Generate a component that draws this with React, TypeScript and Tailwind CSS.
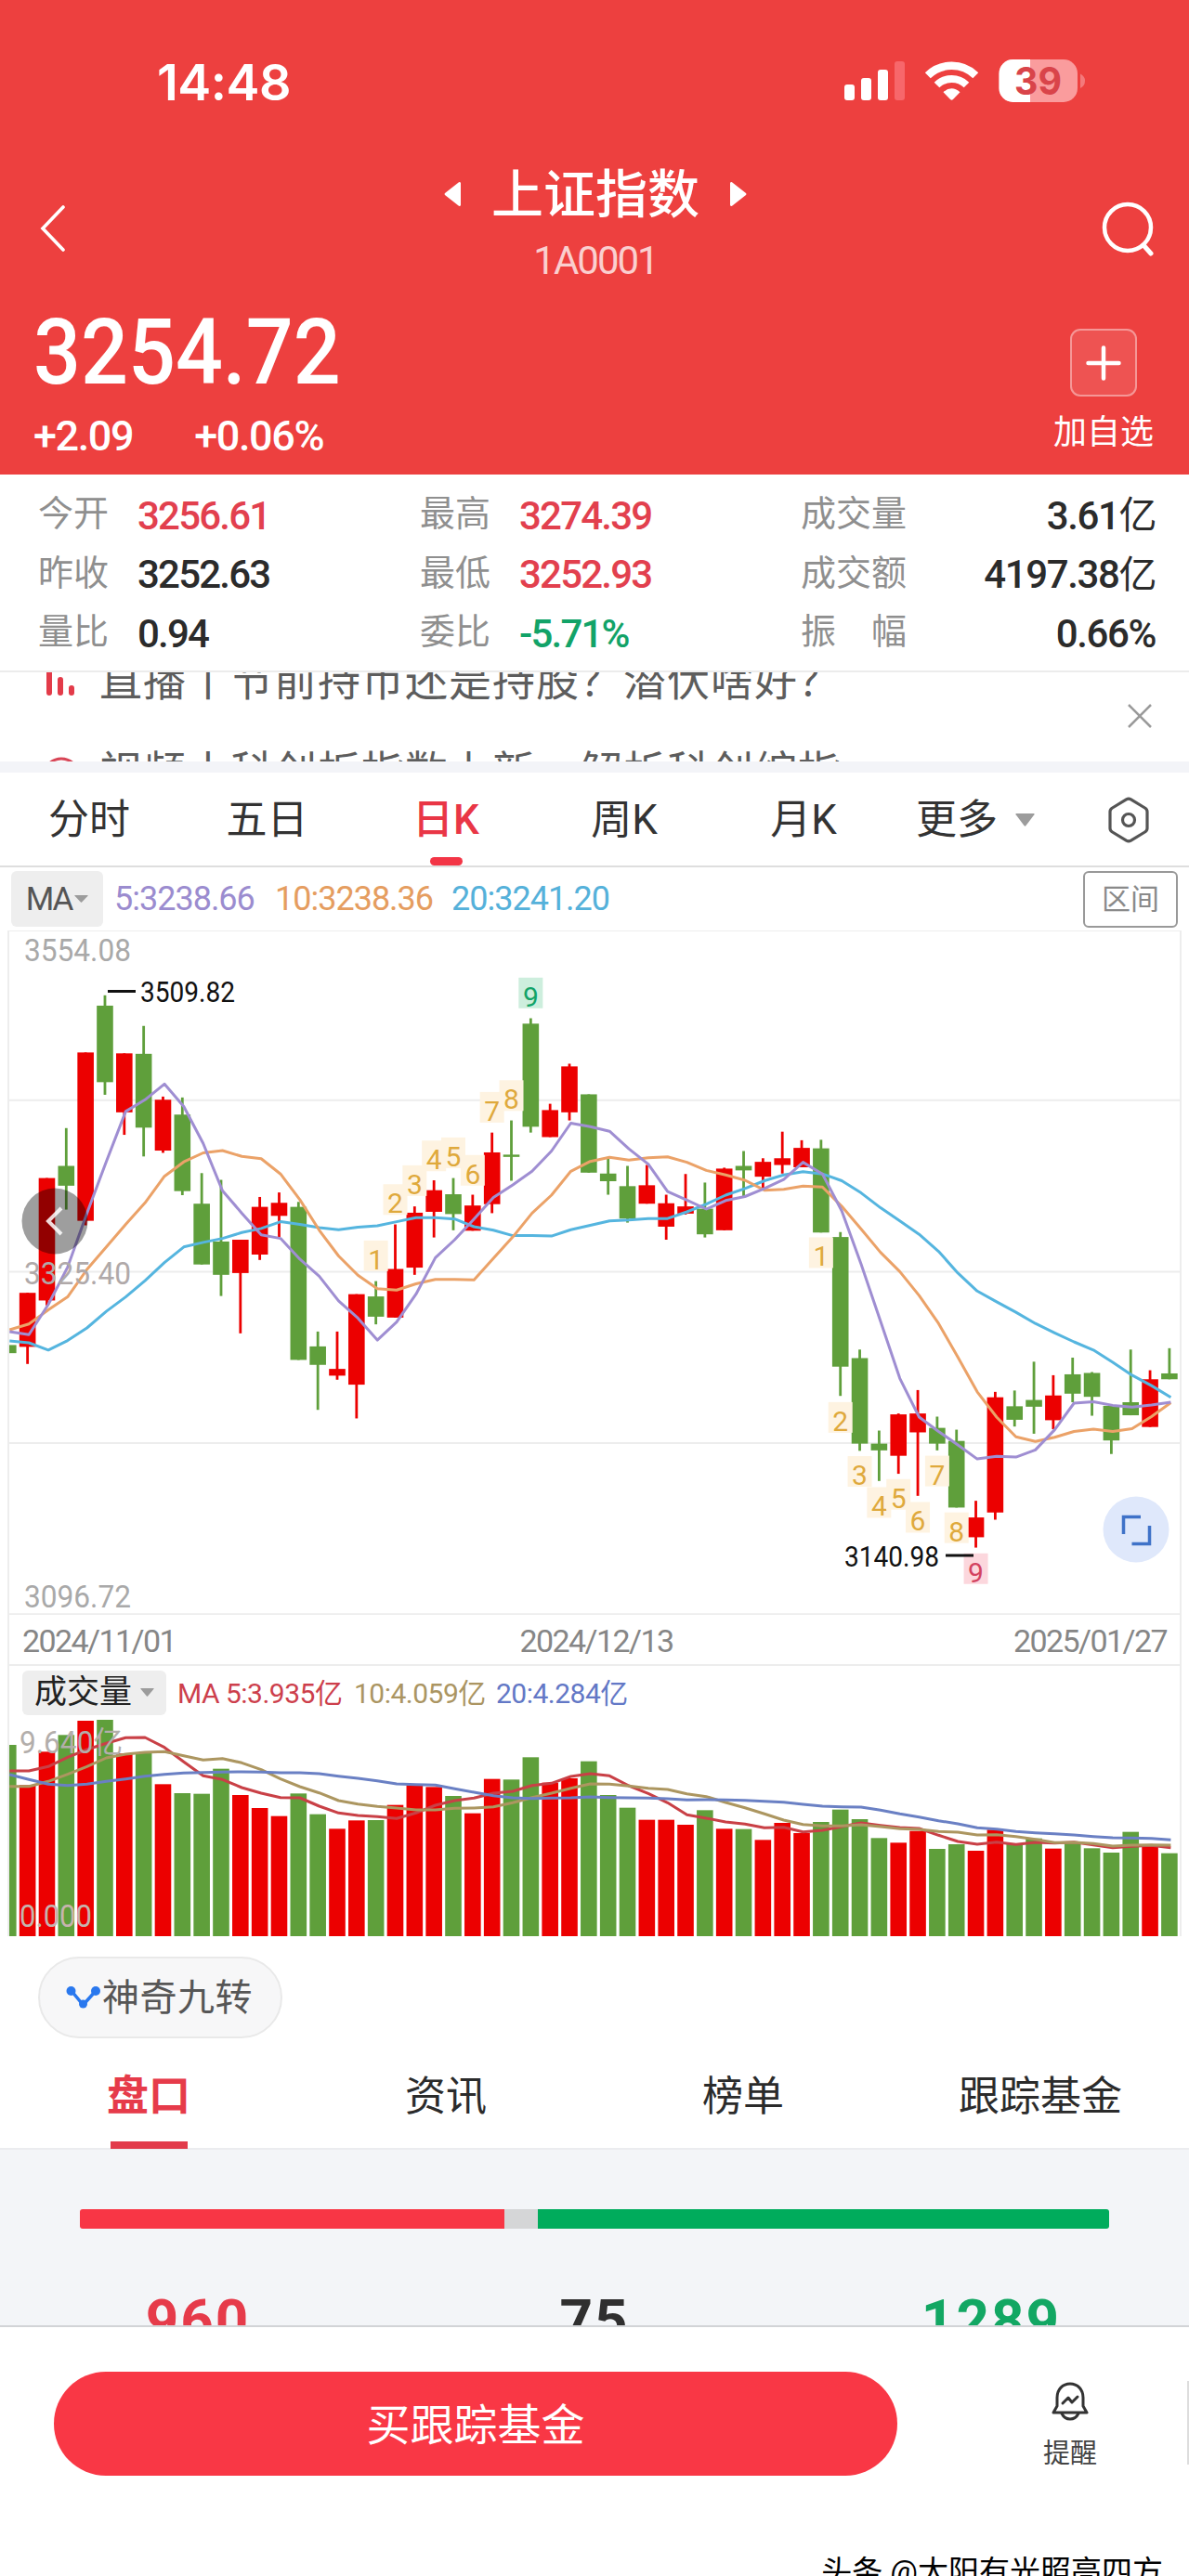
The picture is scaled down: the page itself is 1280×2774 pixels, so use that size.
import React from 'react';

type Candle = [color: 'r' | 'g', high: number, top: number, bottom: number, low: number];

const STEP = 20.835;
const FIRST_X = 8.8;
const BODY = 17.6;
const RED = '#ec0000';
const GREEN = '#5f9f3b';

const cx = (i: number) => FIRST_X + i * STEP;
const priceY = (v: number) => (v - 27) * 0.48473;
const volumeY = (v: number) => (v - 354) / 3;

const candles: Candle[] = [
  ['g', 948, 948, 966, 966],
  ['r', 832, 832, 952, 990],
  ['r', 577, 577, 849, 860],
  ['g', 466, 550, 594, 647],
  ['r', 298, 298, 672, 682],
  ['g', 171, 194, 364, 392],
  ['r', 300, 300, 431, 481],
  ['g', 239, 301, 465, 529],
  ['r', 396, 403, 516, 521],
  ['g', 398, 436, 606, 615],
  ['g', 566, 634, 769, 769],
  ['g', 581, 718, 792, 839],
  ['r', 714, 714, 788, 922],
  ['r', 619, 641, 747, 759],
  ['r', 609, 632, 661, 708],
  ['g', 630, 641, 981, 981],
  ['g', 918, 951, 992, 1092],
  ['r', 918, 1001, 1016, 1025],
  ['r', 835, 835, 1036, 1111],
  ['g', 806, 840, 885, 902],
  ['r', 680, 779, 887, 887],
  ['r', 640, 654, 776, 792],
  ['r', 582, 604, 652, 709],
  ['g', 577, 613, 657, 693],
  ['r', 614, 638, 694, 694],
  ['r', 476, 520, 635, 655],
  ['g', 449, 525, 530, 583],
  ['g', 222, 234, 463, 476],
  ['r', 412, 426, 486, 486],
  ['r', 323, 329, 431, 449],
  ['g', 391, 391, 565, 565],
  ['g', 530, 567, 584, 614],
  ['g', 550, 595, 667, 676],
  ['r', 548, 593, 634, 634],
  ['r', 614, 633, 685, 714],
  ['r', 568, 640, 656, 658],
  ['g', 587, 645, 702, 709],
  ['r', 554, 556, 693, 693],
  ['g', 517, 550, 560, 618],
  ['r', 533, 541, 574, 600],
  ['r', 474, 533, 548, 567],
  ['r', 493, 510, 553, 553],
  ['g', 492, 511, 698, 698],
  ['g', 697, 708, 996, 1061],
  ['g', 958, 977, 1167, 1183],
  ['g', 1138, 1167, 1182, 1250],
  ['r', 1100, 1102, 1194, 1234],
  ['r', 1048, 1100, 1142, 1283],
  ['g', 1107, 1132, 1167, 1182],
  ['g', 1136, 1161, 1309, 1309],
  ['r', 1294, 1331, 1375, 1398],
  ['r', 1052, 1064, 1320, 1336],
  ['g', 1049, 1084, 1114, 1129],
  ['g', 985, 1070, 1085, 1145],
  ['r', 1015, 1060, 1115, 1135],
  ['g', 976, 1013, 1056, 1075],
  ['g', 1008, 1010, 1063, 1105],
  ['g', 1080, 1083, 1160, 1190],
  ['g', 958, 1075, 1104, 1104],
  ['r', 1004, 1024, 1130, 1130],
  ['g', 955, 1011, 1024, 1024],
];

const priceMa5 = [
  918, 925, 858, 775, 655, 540, 429, 403, 368, 418, 500, 605, 655, 703, 711, 757, 795, 850, 888, 937, 897, 835, 754,
  714, 668, 620, 592, 562, 517, 455, 463, 473, 512, 546, 607, 626, 646, 627, 618, 600, 580, 542, 568, 650, 768, 895,
  1022, 1108, 1140, 1170, 1201, 1195, 1197, 1181, 1136, 1077, 1074, 1082, 1086, 1081, 1075,
];
const priceMa10 = [
  914, 901, 870, 841, 780, 730, 680, 632, 573, 541, 521, 516, 529, 534, 568, 625, 693, 750, 793, 823, 826, 812, 802,
  802, 803, 755, 708, 655, 615, 562, 540, 531, 537, 532, 530, 542, 560, 570, 582, 604, 602, 595, 597, 640, 690, 742,
  785, 838, 900, 975, 1052, 1108, 1152, 1162, 1153, 1140, 1135, 1140, 1134, 1107, 1076,
];
const priceMa20 = [
  939, 943, 959, 938, 910, 873, 841, 805, 765, 730, 720, 711, 698, 689, 674, 680, 687, 692, 686, 683, 674, 665, 665,
  668, 685, 693, 705, 705, 706, 692, 682, 672, 670, 667, 667, 652, 635, 615, 600, 583, 570, 563, 568, 583, 610, 643,
  672, 702, 740, 788, 828, 852, 875, 900, 921, 941, 959, 986, 1015, 1038, 1064,
];

const volumes = [
  450, 580, 472, 418, 372, 369, 478, 474, 577, 606, 608, 527, 612, 654, 680, 607, 674, 721, 694, 693, 644, 580, 586,
  615, 671, 560, 562, 490, 572, 558, 503, 612, 653, 692, 692, 708, 661, 721, 722, 757, 702, 735, 699, 659, 690, 751,
  766, 728, 786, 771, 792, 724, 768, 752, 785, 763, 784, 798, 731, 775, 800,
];
const volumeMa5 = [
  534, 534, 520, 490, 465, 445, 427, 426, 458, 505, 550, 562, 588, 606, 620, 621, 648, 670, 678, 682, 688, 670, 645,
  630, 622, 606, 600, 581, 574, 552, 543, 550, 582, 607, 637, 676, 687, 699, 706, 718, 716, 731, 726, 714, 702, 710,
  717, 720, 742, 762, 771, 764, 772, 765, 767, 764, 773, 782, 778, 775, 782,
];
const volumeMa10 = [
  584, 584, 568, 545, 520, 492, 480, 474, 472, 485, 499, 494, 508, 530, 560, 585, 605, 630, 641, 649, 654, 660, 660,
  655, 654, 650, 637, 620, 606, 590, 576, 577, 583, 590, 594, 608, 617, 636, 653, 673, 693, 707, 712, 712, 708, 714,
  721, 723, 730, 732, 741, 740, 746, 755, 766, 765, 769, 777, 774, 773, 774,
];
const volumeMa20 = [
  546, 562, 577, 581, 577, 568, 560, 551, 545, 541, 539, 538, 537, 538, 540, 540, 543, 551, 558, 566, 576, 578, 580,
  592, 603, 614, 621, 623, 622, 621, 618, 620, 621, 622, 624, 628, 627, 628, 629, 632, 635, 642, 648, 650, 651, 661,
  673, 683, 695, 705, 718, 722, 730, 734, 737, 741, 746, 750, 751, 752, 757,
];

// [candle index, label centre, count]
const nineTurns: [number, number, number][] = [
  [19, 757, 1], [20, 632, 2], [21, 590, 3], [22, 535, 4], [23, 528, 5], [24, 567, 6], [25, 427, 7], [26, 401, 8], [27, 173, 9],
  [42, 750, 1], [43, 1116, 2], [44, 1236, 3], [45, 1305, 4], [46, 1287, 5], [47, 1338, 6], [48, 1235, 7], [49, 1361, 8], [50, 1452, 9],
];

const linePoints = (values: number[], toY: (v: number) => number) =>
  values.map((v, i) => `${(cx(i) + 1.5).toFixed(1)},${toY(v).toFixed(1)}`).join(' ');

const Line: React.FC<{ values: number[]; toY: (v: number) => number; color: string }> = ({ values, toY, color }) => (
  <polyline points={linePoints(values, toY)} fill="none" stroke={color} strokeWidth="3" strokeLinejoin="round" />
);

const Label: React.FC<{ x: number; y: number; w: number; size: number; color: string; children: string }> = ({
  x, y, w, size, color, children,
}) => (
  <text x={x} y={y} fontSize={size} fill={color} textLength={w} lengthAdjust="spacingAndGlyphs">
    {children}
  </text>
);

const Caret: React.FC<{ w: number; h: number }> = ({ w, h }) => (
  <svg width={w} height={h} viewBox="0 0 20 12" preserveAspectRatio="none">
    <path d="M1 0H19Q20 0 19.4 1L10.8 11.4Q10 12 9.2 11.4L.6 1Q0 0 1 0Z" fill="#9c9c9c" />
  </svg>
);

const StatusBar = () => (
  <div className="flex h-[176px] items-start justify-between pl-[169px] pr-[112px]">
    <div className="mt-[56px] font-['Inter',sans-serif] text-[54px] leading-[66px] font-semibold tracking-[-0.5px]">14:48</div>
    <svg width="260" height="50" viewBox="908 62 260 50" className="mt-[62px]">
      <rect x="909" y="91" width="11" height="17" rx="3" fill="#fff" />
      <rect x="927" y="84" width="11" height="24" rx="3" fill="#fff" />
      <rect x="945" y="75" width="11" height="33" rx="3" fill="#fff" />
      <rect x="963" y="66" width="11" height="42" rx="3" fill="#f7676b" />
      <path d="M998.800 81.200A37 37 0 0 1 1050.300 81.200" fill="none" stroke="#fff" strokeWidth="8.500" />
      <path d="M1008.500 91.500A23 23 0 0 1 1040.500 91.500" fill="none" stroke="#fff" strokeWidth="8" />
      <path d="M1015.500 99.200Q1024.500 91.500 1033.500 99.200L1026 107Q1024.500 108.500 1023 107Z" fill="#fff" />
      <clipPath id="battery">
        <rect x="1075.500" y="64" width="84.500" height="46" rx="15" />
      </clipPath>
      <g clipPath="url(#battery)">
        <rect x="1075" y="64" width="86" height="46" fill="#fa9c9d" />
        <rect x="1075" y="64" width="34" height="46" fill="#fff" />
      </g>
      <path d="M1163 79.500Q1168 82 1168 87Q1168 92.500 1163 95Z" fill="#f4797b" />
      <text x="1117.500" y="102" textAnchor="middle" fontFamily="Inter, sans-serif" fontWeight="700" fontSize="41" fill="#d9444a" textLength="51" lengthAdjust="spacingAndGlyphs">
        39
      </text>
    </svg>
  </div>
);

const Header = () => (
  <header className="h-[511px] bg-[#ed403f] text-white">
    <StatusBar />
    <div className="flex h-[150px] items-start justify-between pr-[38px] pl-[42px]">
      <svg width="30" height="52" viewBox="0 0 30 52" className="mt-[44px]">
        <path d="M26 3L4 26L26 49" fill="none" stroke="#fff" strokeWidth="3.600" strokeLinecap="round" />
      </svg>
      <div className="ml-[26px] flex flex-col items-center">
        <div className="flex h-[66px] items-center gap-[32px]">
          <svg width="19" height="28" viewBox="0 0 19 28"><path d="M18 2V26Q17 28 15 26L1 15Q0 14 1 13L15 2Q17 0 18 2Z" fill="#fff" /></svg>
          <h1 className="mt-[2px] text-[56px] leading-[66px] font-medium">上证指数</h1>
          <svg width="19" height="28" viewBox="0 0 19 28"><path d="M1 2V26Q2 28 4 26L18 15Q19 14 18 13L4 2Q2 0 1 2Z" fill="#fff" /></svg>
        </div>
        <div className="mt-[15px] text-[42px] leading-[48px] tracking-[-2px] text-white/75">1A0001</div>
      </div>
      <svg width="58" height="60" viewBox="0 0 58 60" className="mt-[40px]">
        <circle cx="30" cy="29" r="25" fill="none" stroke="#fff" strokeWidth="4.500" />
        <path d="M47 48L55 57" stroke="#fff" strokeWidth="5" strokeLinecap="round" />
      </svg>
    </div>
    <div className="flex justify-between pr-[38px] pl-[36px]">
      <div className="pt-[2px]">
        <div className="w-[365px] origin-left scale-x-[.915] text-[98px] leading-[104px] font-medium">3254.72</div>
        <div className="mt-[12px] flex gap-[66px] text-[45px] leading-[52px] font-medium tracking-[-1.4px]">
          <span>+2.09</span>
          <span>+0.06%</span>
        </div>
      </div>
      <div className="flex flex-col items-center pt-[28px]">
        <div className="flex h-[73px] w-[72px] items-center justify-center rounded-[11px] border-2 border-white/40 bg-white/10">
          <svg width="38" height="38" viewBox="0 0 38 38"><path d="M19 2.500V35.500M2.500 19H35.500" stroke="#fff" strokeWidth="4.500" strokeLinecap="round" /></svg>
        </div>
        <div className="mt-[17px] text-[36px] leading-[44px]">加自选</div>
      </div>
    </div>
  </header>
);

const Stat: React.FC<{ label: string; value: string; tone?: string }> = ({ label, value, tone = 'text-[#2b2b2b]' }) => (
  <div className="flex items-center">
    <span className="mr-[31px] text-[38px] text-[#8f8f8f]">{label}</span>
    <span className={`mt-[5px] text-[42px] font-medium tracking-[-1.8px] ${tone}`}>{value}</span>
  </div>
);

const WideStat: React.FC<{ label: string; value: string; unit?: string }> = ({ label, value, unit }) => (
  <div className="flex items-center justify-between">
    <span className="text-[38px] whitespace-pre text-[#8f8f8f]">{label}</span>
    <span className="mt-[5px] flex items-center text-[42px] font-medium tracking-[-1.4px] text-[#2b2b2b]">
      {value}
      {unit && <span className="text-[41px] font-normal">{unit}</span>}
    </span>
  </div>
);

const Stats = () => (
  <section className="grid h-[213px] grid-cols-[411px_410px_382px] grid-rows-[64px_63px_64px] border-b-2 border-[#ececec] pt-[10px] pl-[41px]">
    <Stat label="今开" value="3256.61" tone="text-[#e2404e]" />
    <Stat label="最高" value="3274.39" tone="text-[#e2404e]" />
    <WideStat label="成交量" value="3.61" unit="亿" />
    <Stat label="昨收" value="3252.63" />
    <Stat label="最低" value="3252.93" tone="text-[#e2404e]" />
    <WideStat label="成交额" value="4197.38" unit="亿" />
    <Stat label="量比" value="0.94" />
    <Stat label="委比" value="-5.71%" tone="text-[#12a368]" />
    <WideStat label="振　幅" value="0.66%" />
  </section>
);

const News = () => (
  <section className="flex h-[108px] justify-between overflow-hidden border-b-[12px] border-[#f3f4f8] pr-[40px] pl-[48px]">
    <div className="-mt-[36px] text-[46px] leading-[95px] tracking-[1px] text-[#5d5d5d]">
      <div className="flex h-[95px] items-center">
        <svg width="34" height="36" viewBox="0 0 34 36" className="mr-[25px]">
          <path d="M5 2V28M17 14V28M29 23V28" stroke="#e33b49" strokeWidth="6" strokeLinecap="round" />
        </svg>
        <span className="-mt-[4px]">直播丨节前持币还是持股？潜伏啥好？</span>
      </div>
      <div className="flex h-[95px] items-center">
        <svg width="36" height="40" viewBox="0 0 36 40" className="mt-[6px] mr-[23px]">
          <circle cx="18" cy="22" r="19" fill="none" stroke="#d84556" strokeWidth="3" />
        </svg>
        <span className="mt-[2px]">视频丨科创板指数上新，解析科创综指</span>
      </div>
    </div>
    <svg width="26" height="26" viewBox="0 0 26 26" className="mt-[34px]">
      <path d="M1 1L25 25M25 1L1 25" stroke="#9a9a9a" strokeWidth="2.500" />
    </svg>
  </section>
);

const PeriodTabs = () => (
  <nav className="flex h-[102px] items-center border-b-2 border-[#dedede] pt-[2px] text-[44px] text-[#333]">
    <span className="w-[192px] text-center">分时</span>
    <span className="w-[191px] text-center">五日</span>
    <span className="relative flex h-full w-[194px] items-center justify-center font-medium text-[#e93646]">
      日K
      <i className="absolute bottom-0 h-[9px] w-[35px] rounded-full bg-[#f33546]" />
    </span>
    <span className="w-[190px] text-center">周K</span>
    <span className="w-[196px] text-center">月K</span>
    <span className="ml-[23px] flex items-center gap-[19px]">
      更多
      <Caret w={21} h={14} />
    </span>
    <svg width="44" height="50" viewBox="0 0 44 50" className="mr-[43px] ml-auto" fill="none" stroke="#555" strokeWidth="3.200" strokeLinejoin="round">
      <path d="M19.500 2.800Q22 1.500 24.500 2.800L39.500 12Q42 13.500 42 16V34Q42 36.500 39.500 38L24.500 47.200Q22 48.500 19.500 47.200L4.500 38Q2 36.500 2 34V16Q2 13.500 4.500 12Z" />
      <circle cx="22" cy="25" r="6.500" />
    </svg>
  </nav>
);

const MaBar = () => (
  <div className="flex h-[68px] items-center pr-[12px] pl-[12px] text-[36px] tracking-[-1px]">
    <div className="mr-[12px] flex h-[60px] w-[99px] items-center justify-center gap-[3px] rounded-[6px] bg-[#eee] text-[35px] tracking-[-2px] text-[#555]">
      MA
      <Caret w={15} h={8} />
    </div>
    <span className="w-[173px] text-[#9b8ccf]">5:3238.66</span>
    <span className="w-[190px] text-[#e59d60]">10:3238.36</span>
    <span className="text-[#55b1da]">20:3241.20</span>
    <div className="ml-auto flex h-[61px] w-[102px] items-center justify-center rounded-[6px] border-2 border-[#999] text-[31px] tracking-normal text-[#8a8a8a]">
      区间
    </div>
  </div>
);

const badgeFill = (i: number) => (i === 27 ? '#cdeedd' : i === 50 ? '#fcd7dd' : '#fef3e1');
const badgeText = (i: number) => (i === 27 ? '#12a368' : i === 50 ? '#d34360' : '#dfa93c');

const PriceChart = () => (
  <svg viewBox="10 0 1260 737" className="block h-[737px] w-full" fontFamily="Roboto, sans-serif">
    {[27, 404, 785, 1166, 1546].map((v) => (
      <path key={v} d={`M10 ${priceY(v)}H1270`} stroke="#ededed" strokeWidth="2" />
    ))}
    {candles.map(([color, high, top, bottom, low], i) => (
      <g key={i} fill={color === 'r' ? RED : GREEN}>
        <rect x={cx(i) - 1.4} y={priceY(high)} width="2.8" height={priceY(low) - priceY(high)} />
        <rect x={cx(i) - BODY / 2} y={priceY(top)} width={BODY} height={priceY(bottom) - priceY(top)} />
      </g>
    ))}
    {nineTurns.map(([i, v, n]) => (
      <g key={i}>
        <rect x={cx(i) - 13} y={priceY(v) - 20} width="26" height="33" fill={badgeFill(i)} />
        <text x={cx(i)} y={priceY(v) + 11} textAnchor="middle" fontSize="30" fill={badgeText(i)}>{n}</text>
      </g>
    ))}
    <Line values={priceMa20} toY={priceY} color="#55b5df" />
    <Line values={priceMa10} toY={priceY} color="#eba268" />
    <Line values={priceMa5} toY={priceY} color="#9f8ed2" />
    <Label x={26} y={33} w={115} size={34} color="#a9a9a9">3554.08</Label>
    <Label x={26} y={381} w={115} size={34} color="#b0a9a9">3325.40</Label>
    <Label x={26} y={729} w={115} size={34} color="#a9a9a9">3096.72</Label>
    <path d="M116 65.500H146M1018 673H1048" stroke="#111" strokeWidth="2.800" />
    <Label x={151} y={77} w={102} size={31} color="#111">3509.82</Label>
    <Label x={909} y={685} w={102} size={31} color="#111">3140.98</Label>
    <circle cx="59" cy="313" r="35.500" fill="#000" fillOpacity=".38" />
    <path d="M66 299L52 313L66 327" fill="none" stroke="#fff" strokeOpacity=".85" strokeWidth="4" />
    <circle cx="1223" cy="645" r="35.500" fill="#dfe8fb" />
    <path d="M1228 631.500H1209.500V650M1218.500 660.500H1237.500V641" fill="none" stroke="#3f72c8" strokeWidth="3.500" />
  </svg>
);

const VolumeChart = () => (
  <svg viewBox="10 0 1260 238" className="block h-[238px] w-full" fontFamily="Roboto, 'Noto Sans CJK SC', sans-serif">
    {volumes.map((v, i) => (
      <rect key={i} x={cx(i) - BODY / 2} y={volumeY(v)} width={BODY} height={238 - volumeY(v)} fill={candles[i][0] === 'r' ? RED : GREEN} />
    ))}
    <Line values={volumeMa5} toY={volumeY} color="#c94046" />
    <Line values={volumeMa10} toY={volumeY} color="#ac9660" />
    <Line values={volumeMa20} toY={volumeY} color="#6a80c4" />
    <Label x={21} y={41} w={111} size={33} color="#b3aeab">9.640亿</Label>
    <Label x={21} y={228} w={78} size={33} color="#c6b4ae">0.000</Label>
  </svg>
);

const Chart = () => (
  <section className="mx-[8px] h-[1083px] border-x-2 border-[#ededed]">
    <PriceChart />
    <div className="flex h-[55px] items-center justify-between border-b-2 border-[#ededed] px-[14px] pt-[2px] text-[34px] tracking-[-1.6px] text-[#868686]">
      <span>2024/11/01</span>
      <span className="ml-[4px]">2024/12/13</span>
      <span>2025/01/27</span>
    </div>
    <div className="flex h-[53px] items-center pt-[4px] pl-[14px] text-[30px] tracking-[-0.8px]">
      <div className="mr-[12px] flex h-[48px] w-[155px] items-center justify-center gap-[9px] rounded-[6px] bg-[#eee] text-[35px] tracking-normal text-[#222]">
        成交量
        <Caret w={15} h={9} />
      </div>
      <span className="w-[190px] pt-[2px] tracking-[-0.5px] text-[#cd3f4c]">MA 5:3.935亿</span>
      <span className="w-[153px] pt-[2px] tracking-[-0.5px] text-[#ab9562]">10:4.059亿</span>
      <span className="pt-[2px] tracking-[-0.5px] text-[#6378c6]">20:4.284亿</span>
    </div>
    <VolumeChart />
  </section>
);

const TurnPill = () => (
  <div className="flex h-[131px] pt-[22px] pl-[41px]">
    <div className="flex h-[88px] w-[263px] items-center rounded-full border-2 border-[#e9e9e9] bg-[#f7f7f8] pl-[28px] text-[40px] text-[#565656]">
      <svg width="38" height="26" viewBox="0 0 38 26" className="mr-[1px]">
        <path d="M6 6L18.500 21L32 6" fill="none" stroke="#2a78ee" strokeWidth="3.500" />
        <circle cx="5.500" cy="6" r="5" fill="#2a78ee" />
        <circle cx="32" cy="6" r="5" fill="#2a78ee" />
        <circle cx="18.500" cy="20" r="4.500" fill="#2a78ee" />
      </svg>
      <span className="mt-[2px] tracking-[0.5px]">神奇九转</span>
    </div>
  </div>
);

const tabs = ['盘口', '资讯', '榜单', '跟踪基金'];

const InfoTabs = () => (
  <nav className="grid h-[99px] grid-cols-4 border-b-2 border-[#ebecef] text-[44px] text-[#2b2b2b]">
    {tabs.map((tab, i) => (
      <span key={tab} className={`relative flex h-[83px] items-center justify-center ${i === 0 ? 'text-[45px] font-bold text-[#e63b4a]' : ''}`}>
        {tab}
        {i === 0 && <i className="absolute -bottom-[15px] h-[8px] w-[83px] bg-[#e23b4b]" />}
      </span>
    ))}
  </nav>
);

const Breadth = () => (
  <section className="h-[189px] overflow-hidden bg-[#f3f5f8] px-[86px] pt-[64px]">
    <div className="flex h-[21px] overflow-hidden rounded-[3px]">
      <div className="w-[457px] bg-[#f83645]" />
      <div className="w-[36px] bg-[#d5d6d7]" />
      <div className="flex-1 bg-[#00ac5c]" />
    </div>
    <div className="mt-[63px] flex justify-between text-[62px] leading-[72px] font-bold tracking-[2px]">
      <span className="w-[254px] text-center text-[#e63b4a]">960</span>
      <span className="text-[#2f2f2f]">75</span>
      <span className="w-[254px] text-center text-[#12a763]">1289</span>
    </div>
  </section>
);

const BottomBar = () => (
  <footer className="h-[269px] border-t-2 border-[#d2d4d7] bg-white">
    <div className="flex h-[246px] items-start pt-[48px]">
      <button className="ml-[58px] h-[112px] w-[908px] rounded-full bg-[#f93745] pt-[2px] text-[47px] text-white">买跟踪基金</button>
      <div className="ml-[157px] flex flex-col items-center pt-[11px]">
        <svg width="40" height="42" viewBox="0 0 40 42" fill="none" stroke="#333" strokeWidth="3" strokeLinejoin="round" strokeLinecap="round">
          <path d="M6 17C6 8 12 2 20 2S34 8 34 17V26L38 33H2L6 26Z" />
          <path d="M11 34Q14 40 20 40T29 34" />
          <path d="M12 23L18 17L22 22L28 16" />
        </svg>
        <span className="mt-[14px] text-[29px] leading-[42px] text-[#444]">提醒</span>
      </div>
      <div className="mt-[10px] ml-auto h-[90px] w-[2px] bg-[#ddd]" />
    </div>
    <div className="pr-[28px] text-right text-[33px] leading-[36px] text-black">头条 @太阳有光照亮四方</div>
  </footer>
);

const App: React.FC = () => {
  return (
    <div className="h-[2774px] w-[1280px] overflow-hidden bg-white font-['Roboto','Noto_Sans_CJK_SC',sans-serif] leading-none">
      <Header />
      <Stats />
      <News />
      <PeriodTabs />
      <MaBar />
      <Chart />
      <TurnPill />
      <InfoTabs />
      <Breadth />
      <BottomBar />
    </div>
  );
};

export default App;
